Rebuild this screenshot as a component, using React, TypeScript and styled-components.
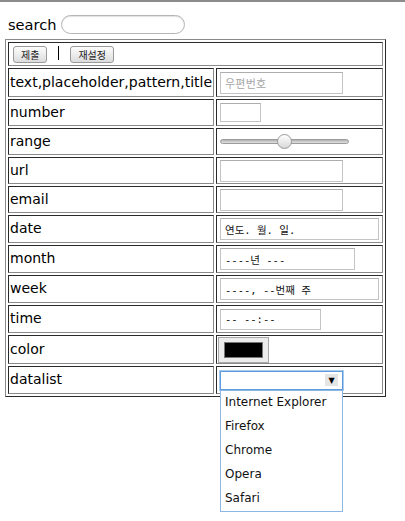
import React from 'react';
import styled, { createGlobalStyle } from 'styled-components';

const GlobalStyle = createGlobalStyle`
  html, body {
    margin: 0;
    padding: 0;
    background: #ffffff;
  }
  body {
    font-family: "DejaVu Sans", "Noto Sans CJK KR", sans-serif;
  }
`;

const Page = styled.div`
  width: 405px;
  height: 521px;
  position: relative;
  box-sizing: border-box;
  border-top: 2px solid #8c8c8c;
`;

const SearchRow = styled.div`
  display: flex;
  align-items: center;
  gap: 5px;
  padding: 12px 0 0 8px;
  height: 21px;
  font-size: 14.6px;
  color: #000;
`;

const SearchBox = styled.div`
  width: 122px;
  height: 17px;
  border: 1px solid #b5b5b5;
  border-radius: 10px;
  box-shadow: inset 0 1px 1px rgba(0, 0, 0, 0.12);
`;

const Table = styled.table`
  margin: 4px 0 0 5px;
  width: 381px;
  table-layout: fixed;
  border-collapse: separate;
  border-spacing: 2px;
  border-style: solid;
  border-width: 1px;
  border-color: #8a8a8a #2a2a2a #2a2a2a #8a8a8a;
`;

const Cell = styled.td`
  padding: 1px;
  border-style: solid;
  border-width: 1px;
  border-color: #2a2a2a #8a8a8a #8a8a8a #2a2a2a;
  font-size: 14px;
  color: #000;
  white-space: nowrap;
  overflow: hidden;
`;

const Content = styled.div<{ $h: number }>`
  height: ${(p) => p.$h}px;
  display: flex;
  align-items: center;
`;

const Label = styled.span`
  display: block;
  margin-top: -2px;
`;

const Btn = styled.div`
  height: 15px;
  padding: 0 7px;
  border: 1px solid #9a9a9a;
  border-radius: 3px;
  background: linear-gradient(#fdfdfd, #dcdcdc);
  font-family: "Noto Sans CJK KR", sans-serif;
  font-size: 10px;
  line-height: 15px;
  color: #222;
`;

const Divider = styled.span`
  width: 1px;
  height: 14px;
  background: #000;
  margin: 0 11px 3px 11px;
`;

const Field = styled.div<{ $w: number; $h?: number }>`
  box-sizing: border-box;
  width: ${(p) => p.$w}px;
  height: ${(p) => p.$h ?? 22}px;
  margin-left: 2px;
  border: 1px solid #c4c4c4;
  border-top-color: #adadad;
  background: #fff;
  display: flex;
  align-items: center;
  padding-left: 4px;
  font-family: "DejaVu Sans Mono", "Noto Sans CJK KR", monospace;
  font-size: 10.5px;
  color: #111;
`;

const Placeholder = styled.span`
  font-family: "Noto Sans CJK KR", sans-serif;
  font-size: 11px;
  color: #a6a6a6;
  letter-spacing: 0.2px;
`;

const RangeWrap = styled.div`
  width: 130px;
  height: 16px;
  margin-left: 2px;
  display: flex;
  align-items: center;
  position: relative;
`;

const Track = styled.div`
  width: 127px;
  height: 3px;
  border: 1px solid #9c9c9c;
  border-radius: 3px;
  background: linear-gradient(#b0b0b0, #e2e2e2);
`;

const Thumb = styled.div`
  position: absolute;
  left: 57px;
  top: 0;
  box-sizing: border-box;
  width: 15px;
  height: 15px;
  border-radius: 50%;
  border: 1px solid #9a9a9a;
  background: linear-gradient(#ffffff, #d8d8d8);
`;

const ColorBtn = styled.div`
  box-sizing: border-box;
  width: 51px;
  height: 26px;
  border: 1px solid #a8a8a8;
  background: #ececec;
  display: flex;
  align-items: center;
  justify-content: center;
`;

const Swatch = styled.div`
  width: 37px;
  height: 14px;
  background: #000;
  border: 1px solid #777;
`;

const Combo = styled.div`
  box-sizing: border-box;
  width: 123px;
  height: 19px;
  margin-left: 2px;
  border: 1px solid #5d9bdc;
  box-shadow: 0 0 0 1px #a9cbef;
  background: #fff;
  display: flex;
  justify-content: flex-end;
  align-items: center;
  padding-right: 4px;
`;

const Arrow = styled.div`
  width: 13px;
  height: 12px;
  background: #e5e5e5;
  display: flex;
  align-items: center;
  justify-content: center;
  font-size: 8px;
  color: #000;
`;

const Dropdown = styled.ul`
  position: absolute;
  left: 220px;
  top: 388px;
  box-sizing: border-box;
  width: 123px;
  height: 122px;
  margin: 0;
  padding: 0;
  list-style: none;
  background: #fff;
  border: 1px solid #8fb7e3;
  font-family: "DejaVu Sans", sans-serif;
  font-size: 12px;
  color: #111;
`;

const Option = styled.li`
  height: 24px;
  line-height: 23px;
  padding-left: 4px;
`;

type Row = { label: string; h: number; control: React.ReactNode };

const rows: Row[] = [
  {
    label: 'text,placeholder,pattern,title',
    h: 25,
    control: (
      <Field $w={123}>
        <Placeholder>우편번호</Placeholder>
      </Field>
    ),
  },
  { label: 'number', h: 23, control: <Field $w={41} $h={19} /> },
  {
    label: 'range',
    h: 23,
    control: (
      <RangeWrap>
        <Track />
        <Thumb />
      </RangeWrap>
    ),
  },
  { label: 'url', h: 23, control: <Field $w={123} /> },
  { label: 'email', h: 23, control: <Field $w={123} /> },
  { label: 'date', h: 24, control: <Field $w={159}>연도. 월. 일.</Field> },
  { label: 'month', h: 24, control: <Field $w={135}>----년 ---</Field> },
  { label: 'week', h: 24, control: <Field $w={159}>----, --번째 주</Field> },
  { label: 'time', h: 24, control: <Field $w={101} $h={21}>-- --:--</Field> },
  {
    label: 'color',
    h: 25,
    control: (
      <ColorBtn>
        <Swatch />
      </ColorBtn>
    ),
  },
  {
    label: 'datalist',
    h: 24,
    control: (
      <Combo>
        <Arrow>▼</Arrow>
      </Combo>
    ),
  },
];

const browsers = ['Internet Explorer', 'Firefox', 'Chrome', 'Opera', 'Safari'];

export default function App() {
  return (
    <Page>
      <GlobalStyle />
      <SearchRow>
        <span>search</span>
        <SearchBox />
      </SearchRow>
      <Table>
        <colgroup>
          <col style={{ width: 206 }} />
          <col style={{ width: 167 }} />
        </colgroup>
        <tbody>
          <tr>
            <Cell colSpan={2}>
              <Content $h={20} style={{ paddingLeft: 3 }}>
                <Btn>제출</Btn>
                <Divider />
                <Btn>재설정</Btn>
              </Content>
            </Cell>
          </tr>
          {rows.map((r) => (
            <tr key={r.label}>
              <Cell>
                <Content $h={r.h}>
                  <Label>{r.label}</Label>
                </Content>
              </Cell>
              <Cell>
                <Content $h={r.h}>{r.control}</Content>
              </Cell>
            </tr>
          ))}
        </tbody>
      </Table>
      <Dropdown>
        {browsers.map((b) => (
          <Option key={b}>{b}</Option>
        ))}
      </Dropdown>
    </Page>
  );
}
